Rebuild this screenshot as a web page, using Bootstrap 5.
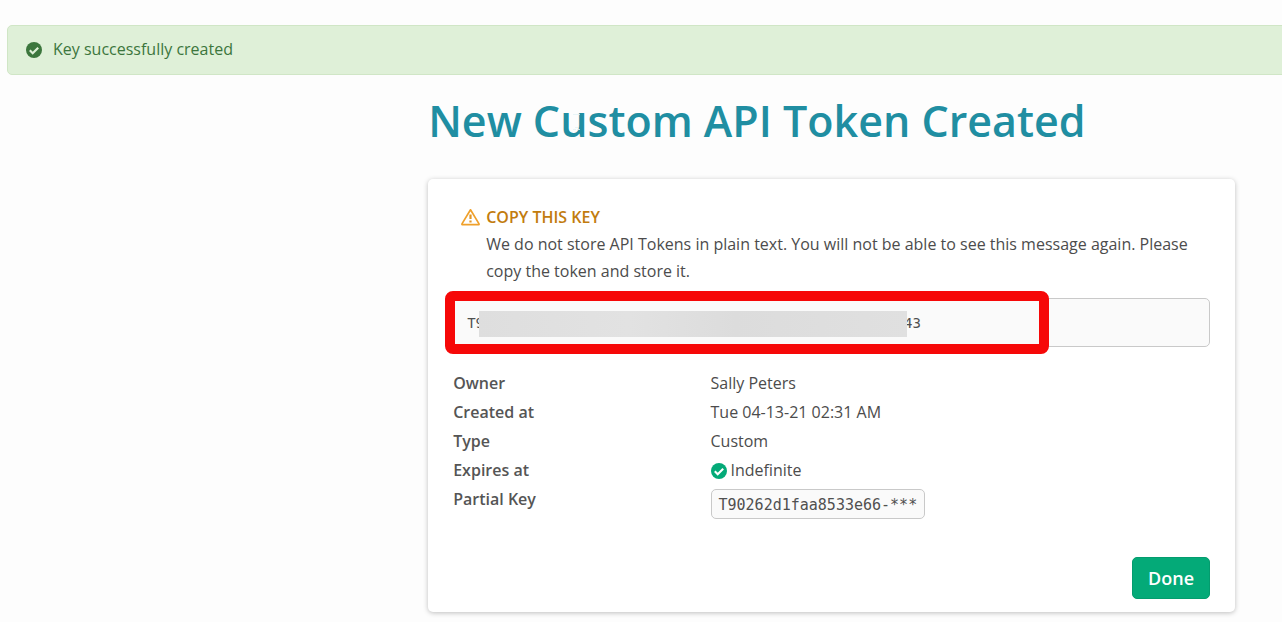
<!DOCTYPE html>
<html lang="en">
<head>
<meta charset="utf-8">
<meta name="viewport" content="width=device-width, initial-scale=1">
<title>New Custom API Token Created</title>
<link href="https://cdn.jsdelivr.net/npm/bootstrap@5.3.0/dist/css/bootstrap.min.css" rel="stylesheet">
<style>
  body { background: #fdfdfd; color: #4c4c4c; font-family: "Open Sans", sans-serif; font-size: 16px; line-height: 27px; overflow-x: hidden; }
  .notice { margin: 25px -8px 0 7px; padding: 10px 18px 11px; background: #dff0d8; border: 1px solid #d0e6c6; border-radius: 5px; color: #3c763d; gap: 11px; }
  .page-main { margin: 18px 47px 10px 33.4%; }
  .page-title { color: #208ea2; font-size: 43px; line-height: 56px; font-weight: 560; margin: 0 0 30px; }
  .token-card { background: #fff; border: 0; border-radius: 5px; padding: 25px 25px 13px; box-shadow: 0 1px 5px rgba(0, 0, 0, .25); }
  .warn-text { padding: 0 8px; gap: 6px; }
  .warn-title { color: #c27c0e; font-size: 16px; line-height: 27px; font-weight: 600; margin: 0; }
  .token-field { height: 49px; margin-top: 13px; padding: 2px 12px 0 13px; background: #fafafa; border: 1px solid #c9c9c9; border-radius: 5px; }
  .mono { font-family: "DejaVu Sans Mono", monospace; color: #505050; font-size: 14px; }
  .redaction { width: 428px; height: 26px; margin: 0 -3px 0 -5px; background: linear-gradient(90deg, #dedede, #e2e2e2 35%, #dcdcdc 60%, #e0e0e0); position: relative; }
  .highlight-frame { left: -9px; top: -8px; bottom: -8px; width: 80%; border: 10px solid #f60808; border-radius: 8px; pointer-events: none; }
  .details { margin: 22px 0 0; line-height: 29px; }
  .details dt { width: 34%; font-weight: 600; color: #555; }
  .details dd { width: 66%; margin: 0; }
  .partial { display: inline-block; height: 30px; line-height: 30px; padding: 0 7px; font-size: 15px; background: #fafafa; border: 1px solid #c9c9c9; border-radius: 5px; margin-top: 4px; }
  .btn-done { --bs-btn-bg: #04aa78; --bs-btn-border-color: #049c6e; --bs-btn-color: #fff; --bs-btn-hover-bg: #03976a; --bs-btn-hover-color: #fff; --bs-btn-font-weight: 600; --bs-btn-font-size: 18px; --bs-btn-padding-x: 15px; --bs-btn-padding-y: 7px; --bs-btn-line-height: 26px; --bs-btn-border-radius: 5px; margin-top: 38px; }
  .pointer { left: 144px; top: 20px; }
</style>
</head>
<body>
<div class="notice d-flex align-items-center" role="alert">
  <svg width="16" height="16" viewBox="0 0 16 16" aria-hidden="true"><circle cx="8" cy="8" r="8" fill="#3c763d"/><path d="M3.8 8.3l2.9 2.9 5.5-5.5" fill="none" stroke="#dff0d8" stroke-width="2.2"/></svg>
  <span>Key successfully created</span>
</div>
<main class="page-main">
  <h1 class="page-title position-relative">New Custom API Token Created
    <svg class="pointer position-absolute" width="9" height="18" viewBox="0 0 9 18" aria-hidden="true"><path d="M1 1.500h7M1 16.500h3M5 16.500h3M3 14.500h3" fill="none" stroke="#e2f2f5" stroke-width=".8"/></svg>
  </h1>
  <section class="token-card card">
    <div class="warn-text d-flex">
      <svg class="flex-shrink-0 mt-1" width="19" height="18" viewBox="0 0 19 18" aria-hidden="true"><path d="M9.5 1.8L1.1 15.6q-.5 1.1.7 1.1h15.4q1.2 0 .7-1.1z" fill="none" stroke="#efa02b" stroke-width="1.7" stroke-linejoin="round"/><path d="M9.5 6.5v4.6M9.5 12.6v2" stroke="#e39624" stroke-width="2.2"/></svg>
      <div>
        <h2 class="warn-title">COPY THIS KEY</h2>
        <p class="m-0">We do not store API Tokens in plain text. You will not be able to see this message again. Please copy the token and store it.</p>
      </div>
    </div>
    <div class="token-field mono d-flex align-items-center position-relative">
      <span>T9</span><span class="redaction flex-shrink-0"></span><span>43</span>
      <div class="highlight-frame position-absolute"></div>
    </div>
    <dl class="details d-flex flex-wrap">
      <dt>Owner</dt><dd>Sally Peters</dd>
      <dt>Created at</dt><dd>Tue 04-13-21 02:31 AM</dd>
      <dt>Type</dt><dd>Custom</dd>
      <dt>Expires at</dt>
      <dd class="d-flex align-items-center gap-1"><svg width="16" height="16" viewBox="0 0 16 16" aria-hidden="true"><circle cx="8" cy="8" r="8" fill="#04aa78"/><path d="M3.8 8.3l2.9 2.9 5.5-5.5" fill="none" stroke="#fff" stroke-width="2.1"/></svg>Indefinite</dd>
      <dt>Partial Key</dt><dd class="d-flex"><code class="partial mono">T90262d1faa8533e66-***</code></dd>
    </dl>
    <div class="text-end"><button type="button" class="btn btn-done">Done</button></div>
  </section>
</main>
<script src="https://cdn.jsdelivr.net/npm/bootstrap@5.3.0/dist/js/bootstrap.bundle.min.js"></script>
</body>
</html>
